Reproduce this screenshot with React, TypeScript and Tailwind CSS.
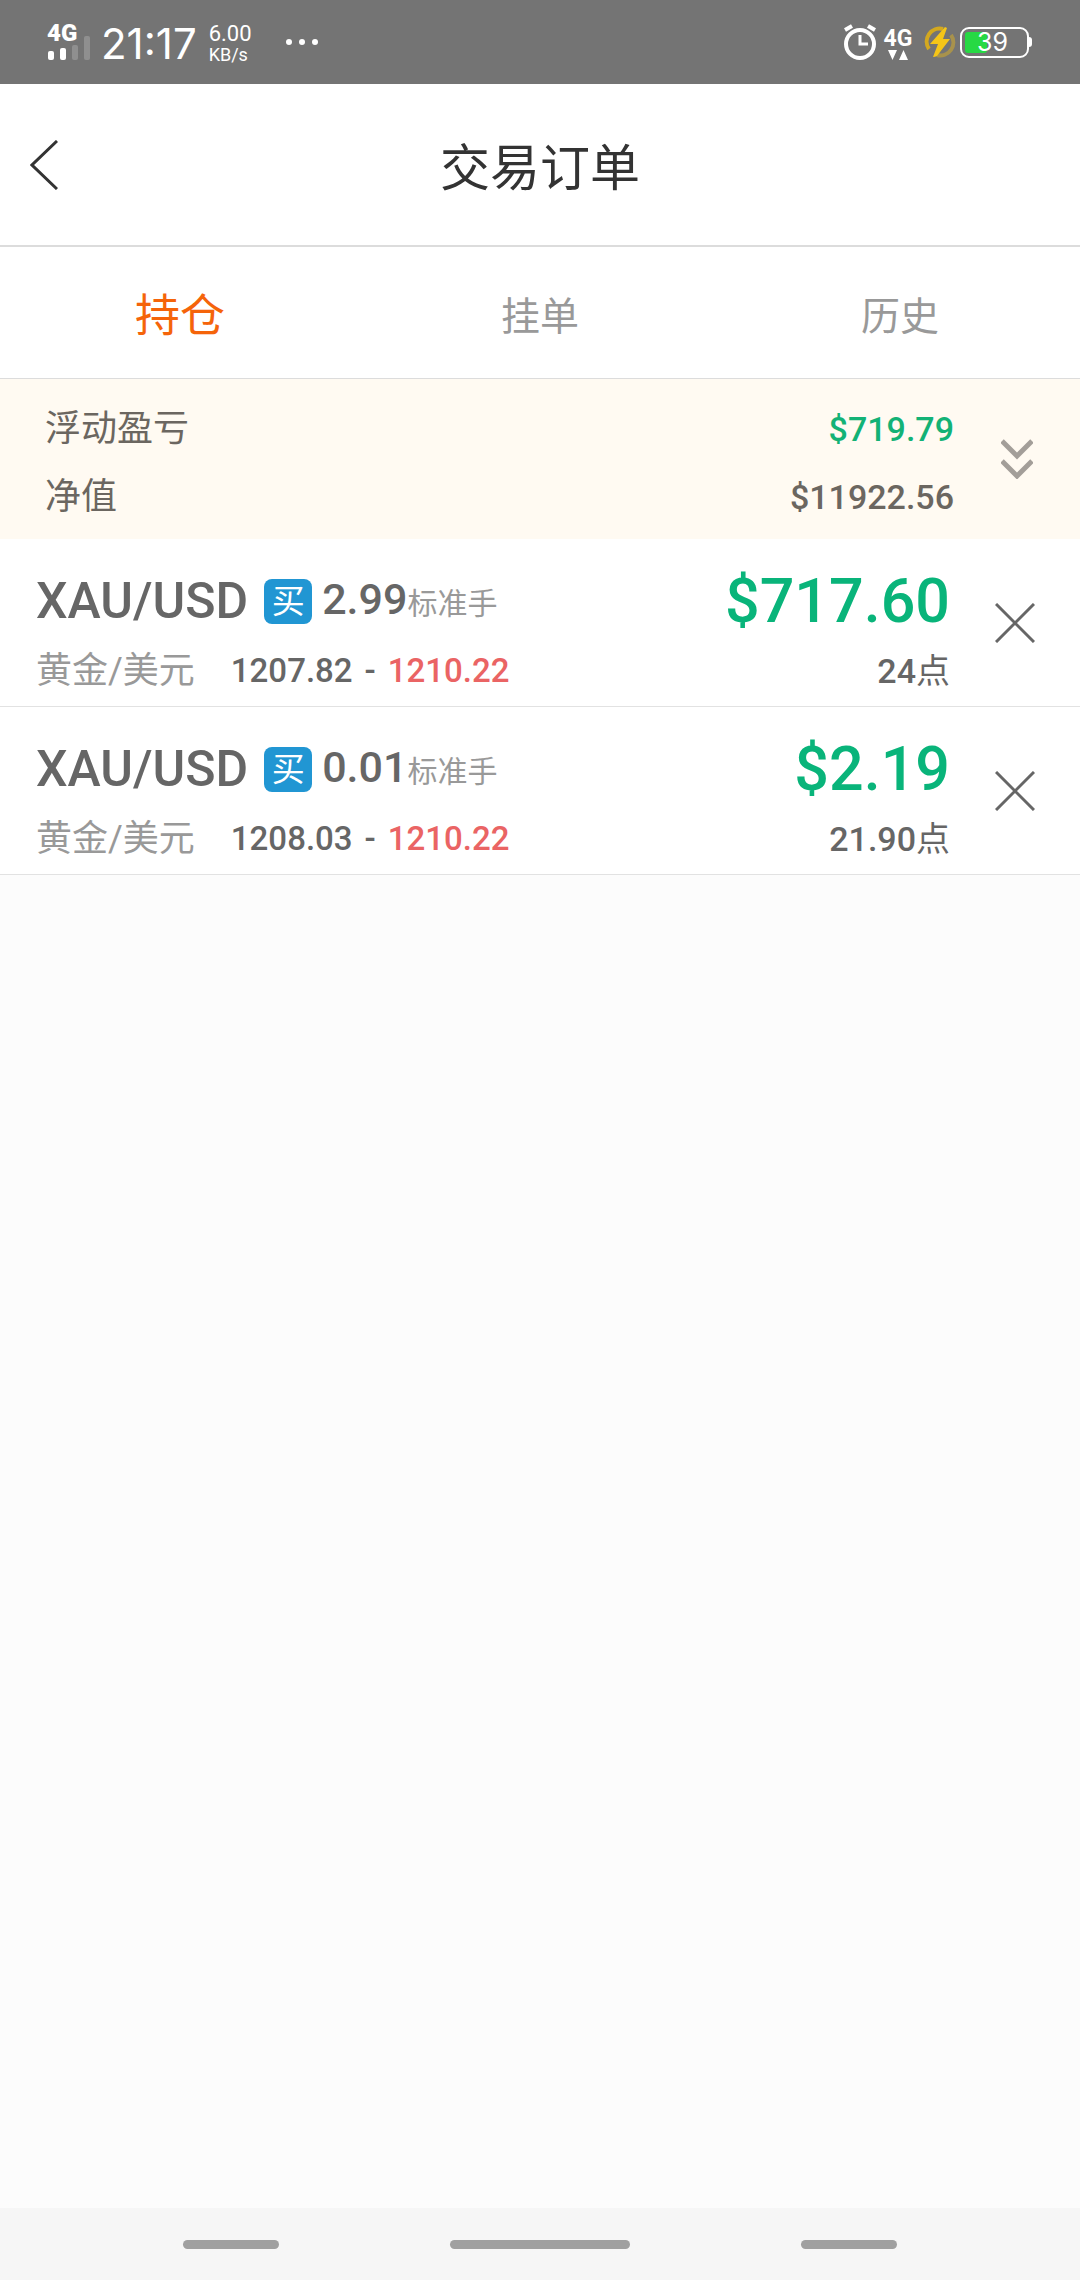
import { useState } from "react";

type Order = {
  id: number;
  symbol: string;
  name: string;
  side: string;
  lots: string;
  openPrice: string;
  currentPrice: string;
  profit: string;
  points: string;
};

const TABS = ["持仓", "挂单", "历史"];

const INITIAL_ORDERS: Order[] = [
  {
    id: 1,
    symbol: "XAU/USD",
    name: "黄金/美元",
    side: "买",
    lots: "2.99",
    openPrice: "1207.82",
    currentPrice: "1210.22",
    profit: "$717.60",
    points: "24",
  },
  {
    id: 2,
    symbol: "XAU/USD",
    name: "黄金/美元",
    side: "买",
    lots: "0.01",
    openPrice: "1208.03",
    currentPrice: "1210.22",
    profit: "$2.19",
    points: "21.90",
  },
];

function StatusBar() {
  return (
    <div className="flex h-[84px] items-center justify-between bg-[#747474] pr-12 pl-[47px] text-white">
      <div className="flex items-center">
        <div className="flex w-[44px] flex-col">
          <span className="font-[Roboto] text-[24px] leading-[20px] font-black">4G</span>
          <svg className="-mt-2 h-[26px] w-[44px]" viewBox="0 0 44 26" fill="#fff">
            <rect x="1" y="16" width="6" height="9" rx="2" />
            <rect x="13" y="13" width="6" height="12" rx="2" />
            <rect x="25" y="10" width="6" height="15" rx="2" opacity=".2" />
            <rect x="37" y="1" width="6" height="24" rx="2" opacity=".2" />
          </svg>
        </div>
        <span className="ml-[10px] pt-1 font-[Inter] text-[42px] leading-[48px]">21:17</span>
        <div className="ml-3 flex flex-col pt-1 font-[Roboto]">
          <span className="text-[22px] leading-[22px]">6.00</span>
          <span className="text-[18px] leading-[20px]">KB/s</span>
        </div>
        <svg className="ml-[34px] h-2 w-8" viewBox="0 0 32 8" fill="#fff">
          <circle cx="3" cy="4" r="3" />
          <circle cx="16" cy="4" r="3" />
          <circle cx="29" cy="4" r="3" />
        </svg>
      </div>

      <div className="flex items-center">
        <svg className="h-9 w-8" viewBox="0 0 32 36" fill="none" stroke="#fff">
          <circle cx="16" cy="20" r="14" strokeWidth="4" />
          <path d="M16 11v9h8" strokeWidth="3" />
          <path d="M1 6l7-4M31 6l-7-4" strokeWidth="4" />
        </svg>
        <div className="ml-2 flex w-7 flex-col items-center pt-1">
          <span className="font-[Roboto] text-[23px] leading-[22px] font-bold">4G</span>
          <svg className="h-[10px] w-5" viewBox="0 0 20 10" fill="#fff">
            <path d="M0 0h9L4.500 10zM11 10h9L15.500 0z" />
          </svg>
        </div>
        <svg className="ml-3 h-8 w-8" viewBox="0 0 32 32" fill="none">
          <path d="M19 3A13 13 0 0 0 5 23" stroke="#d3a81f" strokeWidth="4" />
          <path d="M13 29A13 13 0 0 0 27 9" stroke="#a8924c" strokeWidth="4" />
          <path d="M21 1L6 18h8l-5 13q2 0 4-1l13-17h-7l4-11z" fill="#f5c518" />
        </svg>
        <div className="ml-1 flex items-center">
          <div className="relative flex h-[31px] w-[69px] items-center justify-center rounded-[9px] border-2 border-white">
            <span className="absolute inset-y-[3px] left-[3px] w-[22px] rounded-[3px] bg-[#27d944]" />
            <span className="relative pr-1 font-[Inter] text-[25px] leading-[28px]">39</span>
          </div>
          <span className="h-[10px] w-[3px] rounded-r-full bg-white" />
        </div>
      </div>
    </div>
  );
}

function OrderRow({ order, onClose }: { order: Order; onClose: (id: number) => void }) {
  return (
    <li className="flex border-b border-[#e2e2e2] bg-white pl-9 text-[#666666]">
      <div className="flex-1 pt-8 pb-[13px]">
        <div className="flex h-[60px] items-center">
          <span className="text-[50px] leading-[60px] font-medium">{order.symbol}</span>
          <span className="ml-4 flex h-[45px] w-12 items-center justify-center rounded-[8px] bg-[#2196d3] text-[33px] leading-[45px] text-white">
            {order.side}
          </span>
          <span className="ml-[10px] text-[43px] leading-[60px] font-medium">
            {order.lots}
            <span className="text-[30px] font-normal text-[#999999]">标准手</span>
          </span>
        </div>
        <div className="mt-[18px] flex items-center text-[33px] leading-[44px] font-medium">
          <span className="text-[36px] font-normal text-[#999999]">{order.name}</span>
          <span className="ml-9">{order.openPrice}</span>
          <span className="mx-3">-</span>
          <span className="text-[#ea6464]">{order.currentPrice}</span>
        </div>
      </div>

      <div className="pt-8 pb-[13px] text-right font-medium">
        <div className="text-[61px] leading-[60px] text-[#09b47a]">{order.profit}</div>
        <div className="mt-[18px] text-[34px] leading-[44px]">
          {order.points}
          <span className="font-normal">点</span>
        </div>
      </div>

      <button
        type="button"
        aria-label="平仓"
        onClick={() => onClose(order.id)}
        className="flex w-[130px] items-center justify-center"
      >
        <svg className="h-10 w-10" viewBox="0 0 40 40" fill="none" stroke="#666" strokeWidth="3">
          <path d="M1 1l38 38M39 1L1 39" />
        </svg>
      </button>
    </li>
  );
}

export default function App() {
  const [activeTab, setActiveTab] = useState(TABS[0]);
  const [orders, setOrders] = useState(INITIAL_ORDERS);

  const handleClose = (id: number) => {
    setOrders(orders.filter((o) => o.id !== id));
  };

  return (
    <div className="flex min-h-screen flex-col bg-[#fcfcfc] font-[Roboto,'Noto_Sans_CJK_SC',sans-serif]">
      <StatusBar />

      <header className="grid h-[163px] grid-cols-[1fr_auto_1fr] items-center border-b-2 border-[#dcdcdc] bg-white">
        <button type="button" aria-label="返回" className="pl-[30px]">
          <svg className="h-[50px] w-7" viewBox="0 0 28 50" fill="none" stroke="#333" strokeWidth="3">
            <path d="M27 1L2 25l25 24" />
          </svg>
        </button>
        <h1 className="pt-2 text-[50px] leading-[60px] text-[#333333]">交易订单</h1>
      </header>

      {/* 标签栏 */}
      <nav className="grid h-[132px] grid-cols-3 border-b border-[#dcdcdc] bg-white">
        {TABS.map((tab) => (
          <button
            key={tab}
            type="button"
            onClick={() => setActiveTab(tab)}
            className={
              tab === activeTab
                ? "pt-2 text-[45px] leading-[60px] text-[#f5640a]"
                : "pt-2 text-[39px] leading-[60px] text-[#999999]"
            }
          >
            {tab}
          </button>
        ))}
      </nav>

      {/* 账户汇总 */}
      <section className="flex items-center bg-[#fffaf2] pl-[45px] text-[#6b6660]">
        <dl className="flex-1 pt-4 pb-2">
          <div className="flex items-center justify-between leading-[68px]">
            <dt className="text-[36px]">浮动盈亏</dt>
            <dd className="text-[34px] font-medium text-[#13b276]">$719.79</dd>
          </div>
          <div className="flex items-center justify-between leading-[68px]">
            <dt className="text-[36px]">净值</dt>
            <dd className="text-[34px] font-medium">$11922.56</dd>
          </div>
        </dl>
        <button type="button" aria-label="展开" className="flex w-[126px] justify-center">
          <svg className="h-10 w-8" viewBox="0 0 32 40" fill="none" stroke="#a39e99" strokeWidth="5">
            <path d="M1 2l15 15L31 2M1 22l15 15 15-15" />
          </svg>
        </button>
      </section>

      <main className="flex-1">
        <ul>
          {orders.map((order) => (
            <OrderRow key={order.id} order={order} onClose={handleClose} />
          ))}
        </ul>
      </main>

      {/* 底部手势条 */}
      <footer className="flex h-[72px] items-center justify-between bg-[#f6f6f6] px-[183px]">
        <span className="h-[9px] w-24 rounded-full bg-[#a0a0a0]" />
        <span className="h-[9px] w-[180px] rounded-full bg-[#a0a0a0]" />
        <span className="h-[9px] w-24 rounded-full bg-[#a0a0a0]" />
      </footer>
    </div>
  );
}
